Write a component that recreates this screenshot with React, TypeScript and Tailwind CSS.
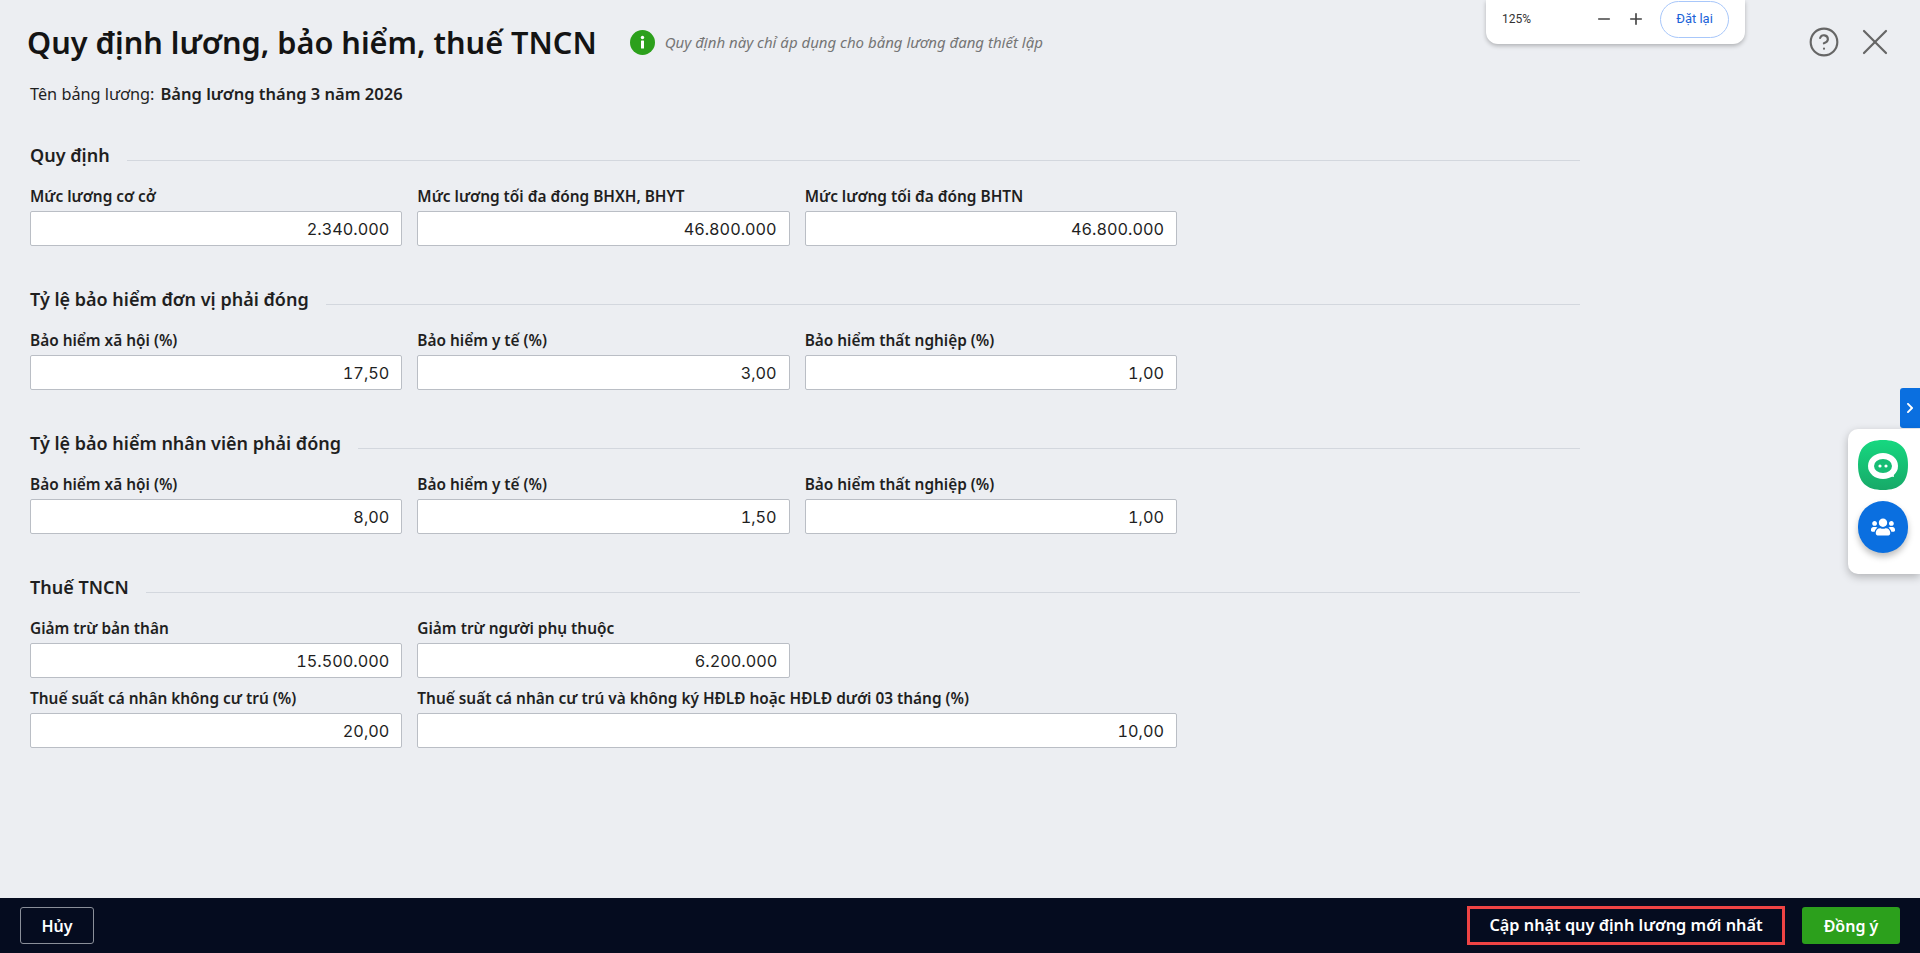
import { CircleHelp, Minus, Plus, X } from "lucide-react";
import { FaChevronRight, FaUsers } from "react-icons/fa";

interface Field {
  label: string;
  value: string;
  wide?: boolean;
}

interface Section {
  title: string;
  fields: Field[];
}

const sections: Section[] = [
  {
    title: "Quy định",
    fields: [
      { label: "Mức lương cơ cở", value: "2.340.000" },
      { label: "Mức lương tối đa đóng BHXH, BHYT", value: "46.800.000" },
      { label: "Mức lương tối đa đóng BHTN", value: "46.800.000" },
    ],
  },
  {
    title: "Tỷ lệ bảo hiểm đơn vị phải đóng",
    fields: [
      { label: "Bảo hiểm xã hội (%)", value: "17,50" },
      { label: "Bảo hiểm y tế (%)", value: "3,00" },
      { label: "Bảo hiểm thất nghiệp (%)", value: "1,00" },
    ],
  },
  {
    title: "Tỷ lệ bảo hiểm nhân viên phải đóng",
    fields: [
      { label: "Bảo hiểm xã hội (%)", value: "8,00" },
      { label: "Bảo hiểm y tế (%)", value: "1,50" },
      { label: "Bảo hiểm thất nghiệp (%)", value: "1,00" },
    ],
  },
];

function FieldBox({ field }: { field: Field }) {
  return (
    <div className={field.wide ? "col-span-2" : ""}>
      <div className="mb-[5px] h-[18px] text-[15.4px] leading-[18px] font-semibold whitespace-nowrap text-[#1f1f1f]">
        {field.label}
      </div>
      <input
        readOnly
        value={field.value}
        className="h-[35px] w-full rounded-[2px] border border-[#babec5] bg-white pr-3 text-right font-['Inter',sans-serif] text-[16.25px] tabular-nums text-[#1f1f1f] outline-none"
      />
    </div>
  );
}

function SectionTitle({ title }: { title: string }) {
  return (
    <div className="flex h-[22px] items-end gap-[17px]">
      <div className="text-[18px] leading-[22px] font-semibold whitespace-nowrap text-[#1f1f1f]">
        {title}
      </div>
      <div className="mb-[5px] h-px flex-1 bg-[#d3d7de]"></div>
    </div>
  );
}

function ZoomPanel() {
  return (
    <div className="absolute top-0 left-[1486px] flex h-[44px] w-[259px] items-center rounded-b-[12px] bg-white pr-4 pb-[6px] pl-4 shadow-[0_2px_4px_rgba(0,0,0,0.25)]">
      <span className="font-['Roboto',sans-serif] text-[12px] text-[#333]">125%</span>
      <Minus className="ml-[64px] h-[18px] w-[18px] text-[#444]" strokeWidth={2.2} />
      <Plus className="ml-[14px] h-[18px] w-[18px] text-[#444]" strokeWidth={2.2} />
      <button className="ml-[15px] flex h-[37px] w-[69px] items-center justify-center rounded-full border border-[#a8c7fa] font-['Roboto',sans-serif] text-[13px] text-[#1a63d8]">
        Đặt lại
      </button>
    </div>
  );
}

function SidePanel() {
  return (
    <>
      <div className="absolute top-[388px] right-0 flex h-[40px] w-[20px] items-center justify-center rounded-l-[3px] bg-[#0a6fe0] text-white">
        <FaChevronRight className="h-[12px] w-[12px]" />
      </div>
      <div className="absolute top-[429px] right-0 flex h-[145px] w-[72px] flex-col items-center gap-[11px] rounded-l-[10px] bg-white pt-[11px] pr-[2px] shadow-[0_3px_8px_rgba(0,0,0,0.25)]">
        <svg width="50" height="50" viewBox="0 0 50 50">
          <defs>
            <linearGradient id="botGreen" x1="0" y1="0" x2="0" y2="1">
              <stop offset="0" stopColor="#16d880" />
              <stop offset="1" stopColor="#17a968" />
            </linearGradient>
          </defs>
          <path d="M25 0C42 0 50 8 50 25C50 42 42 50 25 50C8 50 0 42 0 25C0 8 8 0 25 0Z" fill="url(#botGreen)" />
          <ellipse cx="25" cy="26" rx="15" ry="13" fill="white" />
          <path d="M30 36L36 37L35 31Z" fill="white" />
          <ellipse cx="25" cy="26" rx="9" ry="7" fill="#16bd74" />
          <circle cx="22" cy="26" r="1.6" fill="white" />
          <circle cx="28" cy="26" r="1.6" fill="white" />
        </svg>
        <div className="flex h-[52px] w-[50px] items-center justify-center rounded-full bg-[#0a6fe0] text-white shadow-[0_4px_6px_rgba(0,0,0,0.25)]">
          <FaUsers className="h-[24px] w-[24px]" />
        </div>
      </div>
    </>
  );
}

export default function App() {
  return (
    <div className="relative flex h-[953px] w-[1920px] flex-col overflow-hidden bg-[#eceef2] font-['Noto_Sans',sans-serif] text-[#1f1f1f]">
      <ZoomPanel />
      <SidePanel />

      <div className="flex-1">
        <div className="flex h-[84px] items-center pr-[23px] pl-[27px]">
          <h1 className="text-[30.7px] leading-[84px] font-semibold whitespace-nowrap text-[#141414]">
            Quy định lương, bảo hiểm, thuế TNCN
          </h1>
          <svg width="25" height="25" viewBox="0 0 25 25" className="ml-[33px]">
            <circle cx="12.5" cy="12.5" r="12.5" fill="#2ca01c" />
            <circle cx="12.5" cy="7.5" r="1.7" fill="white" />
            <rect x="11" y="10.5" width="3" height="8" rx="0.5" fill="white" />
          </svg>
          <span className="ml-[10px] text-[15px] text-[#757575] italic">
            Quy định này chỉ áp dụng cho bảng lương đang thiết lập
          </span>
          <CircleHelp className="ml-auto h-[32px] w-[32px] text-[#666]" strokeWidth={1.6} />
          <X className="ml-[13px] h-[44px] w-[44px] text-[#666]" strokeWidth={1.2} />
        </div>

        <div className="flex h-[20px] items-center gap-[6px] pl-[30px] text-[16.3px] leading-[20px]">
          <span>Tên bảng lương:</span>
          <span className="text-[16.5px] font-semibold">Bảng lương tháng 3 năm 2026</span>
        </div>

        <div className="mt-[40px] w-[1580px] pl-[30px]">
          {sections.map((section) => (
            <section key={section.title} className="mb-[42px]">
              <SectionTitle title={section.title} />
              <div className="mt-[22px] grid w-[1147px] grid-cols-3 gap-x-[15px]">
                {section.fields.map((field) => (
                  <FieldBox key={field.label} field={field} />
                ))}
              </div>
            </section>
          ))}
          <section>
            <SectionTitle title="Thuế TNCN" />
            <div className="mt-[22px] grid w-[1147px] grid-cols-3 gap-x-[15px] gap-y-[12px]">
              <FieldBox field={{ label: "Giảm trừ bản thân", value: "15.500.000" }} />
              <div className="col-span-2 w-[373px]">
                <FieldBox field={{ label: "Giảm trừ người phụ thuộc", value: "6.200.000" }} />
              </div>
              <FieldBox field={{ label: "Thuế suất cá nhân không cư trú (%)", value: "20,00" }} />
              <FieldBox
                field={{
                  label: "Thuế suất cá nhân cư trú và không ký HĐLĐ hoặc HĐLĐ dưới 03 tháng (%)",
                  value: "10,00",
                  wide: true,
                }}
              />
            </div>
          </section>
        </div>
      </div>

      <footer className="flex h-[55px] items-center justify-between bg-[#050c1f] pr-[20px] pl-[20px]">
        <button className="h-[37px] w-[74px] rounded-[3px] border border-[#8a8f99] text-[16px] font-semibold text-white">
          Hủy
        </button>
        <div className="flex items-center gap-[17px]">
          <button className="h-[39px] w-[318px] border-[3px] border-[#ef4444] text-[16.3px] font-semibold text-white">
            Cập nhật quy định lương mới nhất
          </button>
          <button className="h-[37px] w-[98px] rounded-[3px] bg-[#2ca01c] text-[16px] font-semibold text-white">
            Đồng ý
          </button>
        </div>
      </footer>
    </div>
  );
}
